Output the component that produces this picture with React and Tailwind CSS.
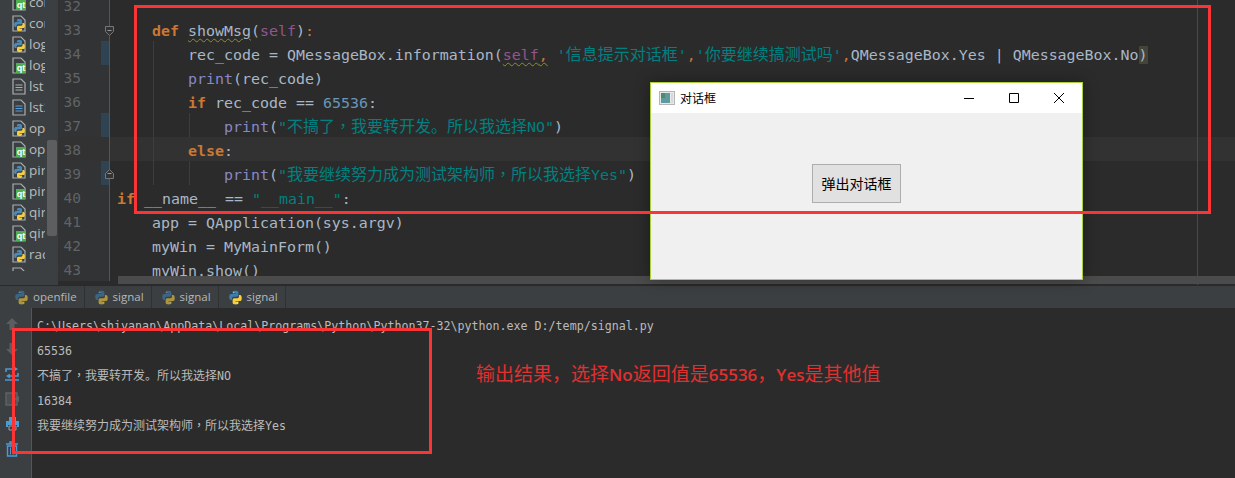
import React from 'react';

const mono = "font-['DejaVu_Sans_Mono','Noto_Sans_CJK_SC',monospace]";

function PyLogo({ size = 14, dim = false }) {
  return (
    <svg width={size} height={size} viewBox="0 0 24 24" className={dim ? 'shrink-0 opacity-60' : 'shrink-0'}>
      <g>
        <path fill="#3d7db0" d="M11.9 1C6.8 1 7.2 3.2 7.2 3.2v2.3H12v.8H5.2S2 5.9 2 11s2.8 4.9 2.8 4.9h1.7v-2.4s-.1-2.8 2.8-2.8h4.7s2.6 0 2.6-2.6V3.7S16.9 1 11.9 1z" />
        <circle cx="9.2" cy="3.6" r="0.9" fill="#dfe9f0" />
      </g>
      <g transform="rotate(180 12 12)">
        <path fill="#f5cf3c" d="M11.9 1C6.8 1 7.2 3.2 7.2 3.2v2.3H12v.8H5.2S2 5.9 2 11s2.8 4.9 2.8 4.9h1.7v-2.4s-.1-2.8 2.8-2.8h4.7s2.6 0 2.6-2.6V3.7S16.9 1 11.9 1z" />
        <circle cx="9.2" cy="3.6" r="0.9" fill="#fff6cf" />
      </g>
    </svg>
  );
}

function Sheet({ children }) {
  return (
    <svg width="14" height="17" viewBox="0 0 14 17" className="shrink-0">
      <path d="M1 1h8l4 4v11H1z" fill="#3c3f41" stroke="#a8adb0" strokeWidth="1.2" />
      {children}
    </svg>
  );
}

function FileIcon({ kind }) {
  if (kind === 'py') {
    return (
      <Sheet>
        <svg x="1" y="3" width="13" height="14" viewBox="0 0 24 24">
          <path fill="#4a8bbd" d="M11.9 1C6.8 1 7.2 3.2 7.2 3.2v2.3H12v.8H5.2S2 5.9 2 11s2.8 4.9 2.8 4.9h1.7v-2.4s-.1-2.8 2.8-2.8h4.7s2.6 0 2.6-2.6V3.7S16.9 1 11.9 1z" />
          <g transform="rotate(180 12 12)">
            <path fill="#f5cf3c" d="M11.9 1C6.8 1 7.2 3.2 7.2 3.2v2.3H12v.8H5.2S2 5.9 2 11s2.8 4.9 2.8 4.9h1.7v-2.4s-.1-2.8 2.8-2.8h4.7s2.6 0 2.6-2.6V3.7S16.9 1 11.9 1z" />
          </g>
        </svg>
      </Sheet>
    );
  }
  if (kind === 'qt') {
    return (
      <Sheet>
        <rect x="4" y="6" width="10" height="10" fill="#4fae4f" />
        <text x="9" y="14" textAnchor="middle" fontSize="9" fontWeight="700" fill="#fff" fontFamily="Liberation Sans">qt</text>
      </Sheet>
    );
  }
  return (
    <Sheet>
      <path d={'M3.5 7h7M3.5 9.5h7M3.5 12h7'} stroke={kind === 'lst2' ? '#5b9bd5' : '#a8adb0'} strokeWidth="1.2" />
    </Sheet>
  );
}

const files = [
  ['qt', 'cor'], ['py', 'cor'], ['py', 'log'], ['qt', 'log'], ['lst', 'lst1'], ['lst2', 'lst2'], ['py', 'ope'],
  ['qt', 'ope'], ['py', 'pir'], ['qt', 'pir'], ['py', 'qir'], ['qt', 'qir'], ['py', 'rac'], ['lst', ''],
];

function Sidebar() {
  return (
    <div className="relative w-[58px] shrink-0 bg-[#3c3f41] h-[285px]">
      <div className="h-[271px] overflow-hidden">
        <div className="flex flex-col pl-[12px] -mt-[8px]">
          {files.map(([kind, name], i) => (
            <div key={i} className="flex items-center h-[21px] shrink-0 gap-[3px] text-[#bbbbbb] text-[13.5px] font-['Open_Sans',sans-serif]">
              <FileIcon kind={kind} />
              <span className="w-[16px] overflow-hidden whitespace-nowrap">{name}</span>
            </div>
          ))}
        </div>
      </div>
      <div className="absolute left-[47px] top-[140px] w-[10px] h-[96px] rounded-[2px] bg-[#5c5e60]" />
    </div>
  );
}

const K = ({ children }) => <span className="text-[#cc7832] font-bold">{children}</span>;
const O = ({ children }) => <span className="text-[#cc7832]">{children}</span>;
const B = ({ children }) => <span className="text-[#8888c6]">{children}</span>;
const S = ({ children }) => <span className="text-[#008080]">{children}</span>;
const Cn = ({ children }) => <span className="text-[16px]">{children}</span>;
const Comma = () => <span className="leading-[0] font-['Noto_Sans_CJK_TC',sans-serif]">，</span>;
const Wavy = ({ children }) => (
  <span className="underline decoration-wavy decoration-[#8c8c3c] decoration-1 underline-offset-2">{children}</span>
);

const lines = [
  [32, 0, null],
  [33, 4, <><K>def</K> <Wavy>showMsg</Wavy>(<span className="text-[#94558d]">self</span>)<O>:</O></>],
  [34, 8, <>rec_code = QMessageBox.information(<Wavy><span className="text-[#94558d]">self</span><O>,</O></Wavy> <S>'<Cn>信息提示对话框</Cn>'</S><O>,</O><S>'<Cn>你要继续搞测试吗</Cn>'</S><O>,</O>QMessageBox.Yes | QMessageBox.No<span className="bg-[#45443a]">)</span></>],
  [35, 8, <><B>print</B>(rec_code)</>],
  [36, 8, <><K>if</K> rec_code == <span className="text-[#6897bb]">65536</span>:</>],
  [37, 12, <><B>print</B>(<S>"<Cn>不搞了<Comma />我要转开发。所以我选择</Cn>NO"</S>)</>],
  [38, 8, <><K>else</K>:</>],
  [39, 12, <><B>print</B>(<S>"<Cn>我要继续努力成为测试架构师<Comma />所以我选择</Cn>Yes"</S>)</>],
  [40, 0, <><K>if</K> __name__ == <S>"__main__"</S>:</>],
  [41, 4, <>app = QApplication(sys.argv)</>],
  [42, 4, <>myWin = MyMainForm()</>],
  [43, 4, <>myWin.show()</>],
];

const indentClass = { 0: 'pl-[7px]', 4: 'pl-[42px]', 8: 'pl-[78px]', 12: 'pl-[114px]' };
const changed = [34, 37, 39];

function Editor() {
  return (
    <div className={`relative flex-1 flex flex-col overflow-hidden ${mono}`}>
      <div className="flex flex-col -mt-[7px]">
        {lines.map(([n, indent, code]) => (
          <div key={n} className={`flex h-[24px] shrink-0 leading-[28px] ${n === 38 ? 'bg-[#323232]' : ''}`}>
            <div className={`relative w-[52px] shrink-0 border-r border-[#555555] leading-[24px] ${n === 38 ? 'bg-[#323232]' : 'bg-[#313335]'}`}>
              <span className="absolute right-[28px] top-[1px] text-[14.5px] text-[#606366]">{n}</span>
              {changed.includes(n) && <div className="absolute right-0 top-0 w-[8px] h-[24px] bg-[#2f4353]" />}
              {(n === 33 || n === 39) && (
                <svg width="9" height="10" viewBox="0 0 9 10" className={`absolute -right-[5px] ${n === 33 ? 'top-[9px]' : 'top-[8px]'}`}>
                  <path d={n === 33 ? 'M.5.5h8v5l-4 4-4-4z' : 'M.5 9.5h8v-5l-4-4-4 4z'} fill="#313335" stroke="#777777" />
                  <path d="M2.5 4.5h4" stroke="#999999" />
                </svg>
              )}
            </div>
            <div className={`relative flex-1 whitespace-pre text-[14.95px] text-[#a9b7c6] ${indentClass[indent]}`}>
              {(n >= 34 && n <= 39) && <div className="absolute left-[43px] top-0 bottom-0 w-px bg-[#3d3d3d]" />}
              {(n === 37 || n === 39) && <div className="absolute left-[79px] top-0 bottom-0 w-px bg-[#3d3d3d]" />}
              {code}
            </div>
          </div>
        ))}
      </div>
      <div className="absolute left-[1139px] top-0 bottom-0 w-px bg-[#4a4a4a]" />
      <div className="absolute left-[60px] right-0 top-[276px] h-[8px] bg-[#4b4b4b]" />
    </div>
  );
}

function TabItem({ name, dim }) {
  return (
    <div className="flex items-center h-[23px] gap-[4px] pl-[9px] pr-[7px] border-r border-[#2f3133] text-[11.5px] text-[#b4b8ba] font-['Open_Sans',sans-serif]">
      <PyLogo size={15} dim={dim} />
      <span>{name}</span>
    </div>
  );
}

function ToolBtn({ children }) {
  return <div className="flex items-center justify-center h-[25px] w-full shrink-0">{children}</div>;
}

function Toolbar() {
  return (
    <div className="flex flex-col items-center w-[27px] shrink-0 bg-[#3c3f41] pt-[3px] pr-[3px]">
      <ToolBtn>
        <svg width="14" height="14" viewBox="0 0 14 14"><path d="M7 1l6 6H9.5v6h-5V7H1z" fill="#5a5e60" /></svg>
      </ToolBtn>
      <ToolBtn>
        <svg width="14" height="14" viewBox="0 0 14 14"><path d="M7 13l6-6H9.5V1h-5v6H1z" fill="#5a5e60" /></svg>
      </ToolBtn>
      <ToolBtn>
        <svg width="16" height="14" viewBox="0 0 16 14" fill="none" stroke="#4a9ad4" strokeWidth="1.6">
          <path d="M1 13h14M2 5V2h10M10 .5 12.5 2 10 3.5M14 6v3H4M6 7.5 3.5 9 6 10.5" />
        </svg>
      </ToolBtn>
      <ToolBtn>
        <svg width="16" height="16" viewBox="0 0 16 16"><path d="M2 2h11v12H2z" fill="#4c4f51" stroke="#5f6365" strokeWidth="1.4" /><path d="M10 8l5-3v6z" fill="#5f6365" /></svg>
      </ToolBtn>
      <ToolBtn>
        <svg width="15" height="15" viewBox="0 0 15 15">
          <path d="M4 1h7v4H4z" fill="#4a9ad4" />
          <path d="M1 5h13v6h-2V9H3v2H1z" fill="#4a9ad4" />
          <path d="M4 10h7v4H4z" fill="#3c3f41" stroke="#9aa0a4" />
        </svg>
      </ToolBtn>
      <ToolBtn>
        <svg width="14" height="16" viewBox="0 0 14 16">
          <path d="M1 3h12M5 3V1h4v2" fill="none" stroke="#4a9ad4" strokeWidth="1.4" />
          <path d="M2.5 5h9v10h-9z" fill="#3c3f41" stroke="#4a9ad4" strokeWidth="1.4" />
          <path d="M5.5 6.5v7M8.5 6.5v7" stroke="#4a9ad4" />
        </svg>
      </ToolBtn>
    </div>
  );
}

const Cj = ({ children }) => <span className="text-[12px]">{children}</span>;

function Console() {
  const rows = [
    <>C:\Users\shiyanan\AppData\Local\Programs\Python\Python37-32\python.exe D:/temp/signal.py</>,
    <>65536</>,
    <><Cj>不搞了<Comma />我要转开发。所以我选择</Cj>NO</>,
    <>16384</>,
    <><Cj>我要继续努力成为测试架构师<Comma />所以我选择</Cj>Yes</>,
  ];
  return (
    <div className={`flex-1 border-l border-[#555555] ml-[4px] pl-[5px] pt-[6px] bg-[#2b2b2b] text-[11.65px] text-[#bbbbbb] whitespace-pre ${mono}`}>
      {rows.map((r, i) => (
        <div key={i} className="h-[25px] leading-[25px]">{r}</div>
      ))}
    </div>
  );
}

function Dialog() {
  return (
    <div className="absolute left-[650px] top-[82px] w-[433px] h-[198px] flex flex-col border border-[#a9cf3c] bg-[#f0f0f0] shadow-[0_0_14px_rgba(0,0,0,0.35)] font-['Noto_Sans_CJK_SC',sans-serif] text-black">
      <div className="flex items-center h-[30px] bg-white pl-[8px] shrink-0">
        <svg width="16" height="14" viewBox="0 0 16 14" className="shrink-0">
          <rect x="0.5" y="0.5" width="15" height="13" fill="#e8e8e8" stroke="#b5b5b5" />
          <rect x="2" y="2" width="9" height="10" fill="#5f9aa0" />
          <rect x="2" y="2" width="4" height="5" fill="#4d8b6e" />
          <rect x="12" y="2" width="2" height="10" fill="#d8d8d8" />
        </svg>
        <span className="ml-[5px] text-[12px]">对话框</span>
        <div className="flex items-center ml-auto pr-[16px] gap-[31px]">
          <svg width="14" height="14" viewBox="0 0 14 14"><path d="M2 7.5h10" stroke="#000" /></svg>
          <svg width="14" height="14" viewBox="0 0 14 14"><path d="M2.5 2.5h9v9h-9z" fill="none" stroke="#000" /></svg>
          <svg width="14" height="14" viewBox="0 0 14 14"><path d="M2 2l10 10M12 2 2 12" stroke="#000" /></svg>
        </div>
      </div>
      <div className="flex-1 flex justify-center pt-[51px] pr-[20px]">
        <div className="w-[89px] h-[39px] flex items-center justify-center bg-[#e1e1e1] border border-[#adadad] text-[14px]">弹出对话框</div>
      </div>
    </div>
  );
}

const Lat = ({ children }) => <b className="text-[17px] font-['Open_Sans',sans-serif] font-semibold">{children}</b>;

export default function App() {
  return (
    <div className="relative w-[1235px] h-[478px] overflow-hidden bg-[#2b2b2b] flex flex-col">
      <div className="flex h-[285px] shrink-0 overflow-hidden">
        <Sidebar />
        <Editor />
      </div>
      <div className="flex items-center h-[23px] shrink-0 bg-[#3c3f41] border-t border-[#2a2a2a] pl-[5px]">
        <TabItem name="openfile" dim />
        <TabItem name="signal" dim />
        <TabItem name="signal" dim />
        <TabItem name="signal" />
      </div>
      <div className="flex flex-1 min-h-0 bg-[#3c3f41]">
        <Toolbar />
        <Console />
      </div>

      <Dialog />

      <div className="absolute left-[134px] top-[5px] w-[1077px] h-[209px] border-[3px] border-[#fb3535]" />
      <div className="absolute left-[12px] top-[328px] w-[420px] h-[126px] border-[3px] border-[#fb3535]" />
      <div className="absolute left-[476px] top-[360px] text-[19px] leading-[26px] text-[#e0302f] whitespace-nowrap font-['Noto_Sans_CJK_SC',sans-serif]">
        输出结果，选择<Lat>No</Lat>返回值是<Lat>65536</Lat>，<Lat>Yes</Lat>是其他值
      </div>
    </div>
  );
}
